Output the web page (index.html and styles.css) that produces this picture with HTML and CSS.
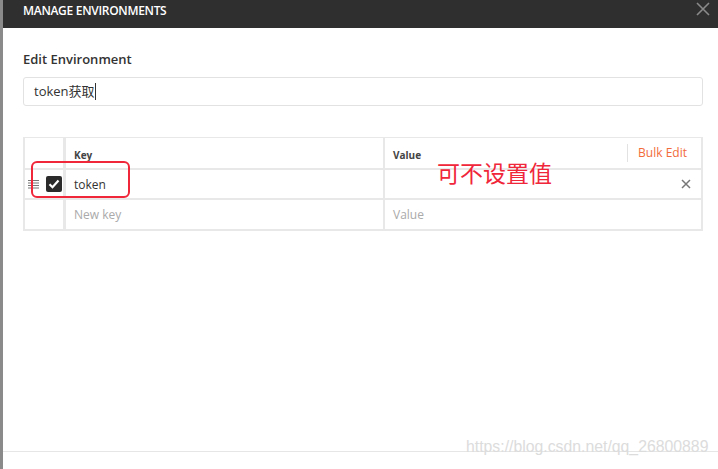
FILE: index.html
```html
<!DOCTYPE html>
<html lang="en">
<head>
  <meta charset="UTF-8">
  <title>Manage Environments</title>
  <link rel="stylesheet" href="styles.css">
</head>
<body>
  <div class="modal">
    <div class="modal-header">
      <span class="modal-title">MANAGE ENVIRONMENTS</span>
      <svg class="modal-close" width="14" height="14" viewBox="0 0 14 14"><path d="M1 1 L13 13 M13 1 L1 13" stroke="#8a8a8a" stroke-width="1.6"/></svg>
    </div>

    <div class="modal-body">
      <div class="field-label">Edit Environment</div>
      <div class="name-input">token获取<span class="caret"></span></div>

      <div class="kv-table">
        <div class="kv-row kv-head">
          <div class="cell cell-handle"></div>
          <div class="cell cell-key">Key</div>
          <div class="cell cell-value">Value
            <span class="bulk-edit">Bulk Edit</span>
          </div>
        </div>
        <div class="kv-row">
          <div class="cell cell-handle">
            <span class="drag">
              <svg width="11" height="10" viewBox="0 0 11 10"><path d="M0 1.5H11M0 4H11M0 6.5H11M0 9H11" stroke="#777" stroke-width="1.1"/></svg>
            </span>
            <span class="checkbox">
              <svg width="12" height="10" viewBox="0 0 12 10"><path d="M1.5 5.2 L4.5 8.2 L10.5 1.5" stroke="#fff" stroke-width="2.2" fill="none"/></svg>
            </span>
          </div>
          <div class="cell cell-key">token</div>
          <div class="cell cell-value">
            <svg class="row-remove" width="10" height="10" viewBox="0 0 10 10"><path d="M1 1 L9 9 M9 1 L1 9" stroke="#777" stroke-width="1.5"/></svg>
          </div>
        </div>
        <div class="kv-row kv-row-last">
          <div class="cell cell-handle"></div>
          <div class="cell cell-key placeholder">New key</div>
          <div class="cell cell-value placeholder">Value</div>
        </div>

        <div class="note-box"></div>
        <div class="note-text">可不设置值</div>
      </div>
    </div>

    <div class="modal-footer">
      <span class="watermark">https://blog.csdn.net/qq_26800889</span>
    </div>
  </div>
</body>
</html>
```

FILE: styles.css
```css
body {
  margin: 0;
  width: 718px;
  height: 469px;
  overflow: hidden;
  background-color: #fff;
  font-family: "Open Sans", "Noto Sans CJK SC", sans-serif;
  color: #333;
}
.modal {
  height: 469px;
  border-left: 3px solid #8a8a8a;
  display: flex;
  flex-direction: column;
  position: relative;
}
.modal-header {
  height: 28px;
  background-color: #2f2f2f;
  display: flex;
  align-items: center;
  justify-content: space-between;
  padding: 0 8px 0 20px;
}
.modal-title {
  color: #fff;
  font-size: 12px;
  letter-spacing: -0.3px;
  font-weight: 600;
  margin-top: -8px;
}
.modal-close {
  margin-top: -10px;
}
.modal-body {
  flex: 1;
  padding: 21px 15px 0 20px;
}
.field-label {
  font-size: 13px;
  font-weight: 600;
  height: 20px;
  line-height: 20px;
}
.name-input {
  margin-top: 8px;
  height: 27px;
  border: 1px solid #e2e2e2;
  border-radius: 3px;
  padding-left: 10px;
  font-size: 13px;
  line-height: 27px;
  display: flex;
  align-items: center;
}
.caret {
  display: inline-block;
  width: 1px;
  height: 17px;
  background-color: #333;
}
.kv-table {
  margin-top: 31px;
  border: 2px solid #e8e8e8;
  border-top-width: 1px;
  position: relative;
  width: 676px;
}
.kv-row {
  display: grid;
  grid-template-columns: 41px 319px 1fr;
  height: 28px;
  border-bottom: 2px solid #e8e8e8;
}
.kv-row-last {
  border-bottom: none;
  height: 29px;
}
.kv-head {
  height: 30px;
}
.cell {
  display: flex;
  align-items: center;
  font-size: 12px;
  padding-left: 8px;
}
.cell-handle {
  border-right: 3px solid #e8e8e8;
  padding-left: 3px;
  gap: 7px;
}
.cell-key {
  border-right: 2px solid #e8e8e8;
  font-size: 12px;
}
.kv-head .cell {
  font-size: 10px;
  font-weight: 700;
  padding-top: 3px;
  color: #444;
}
.cell-value {
  padding-right: 10px;
}
.kv-head .cell-value {
  justify-content: space-between;
  padding-right: 14px;
}
.row-remove {
  margin-left: auto;
}
.bulk-edit {
  font-weight: 400;
  font-size: 12px;
  color: #f26b3a;
  border-left: 1px solid #e2e2e2;
  padding-left: 10px;
  line-height: 18px;
  margin-top: -4px;
}
.drag {
  display: flex;
}
.checkbox {
  width: 16px;
  height: 16px;
  border-radius: 2px;
  background-color: #2b2b2b;
  display: flex;
  align-items: center;
  justify-content: center;
}
.placeholder {
  color: #aaa;
}
.note-box {
  position: absolute;
  left: 6px;
  top: 23px;
  width: 95px;
  height: 33px;
  border: 2px solid #f0263a;
  border-radius: 6px;
}
.note-text {
  position: absolute;
  left: 412px;
  top: 19px;
  font-size: 23px;
  line-height: 30px;
  color: #f0263a;
  font-family: "Noto Sans CJK SC", sans-serif;
  font-weight: 400;
}
.modal-footer {
  height: 17px;
  border-top: 1px solid #e6e6e6;
  position: relative;
}
.watermark {
  position: absolute;
  left: 463px;
  top: -14px;
  font-family: "Liberation Sans", sans-serif;
  font-size: 15.8px;
  color: #dcdcdc;
}
```
